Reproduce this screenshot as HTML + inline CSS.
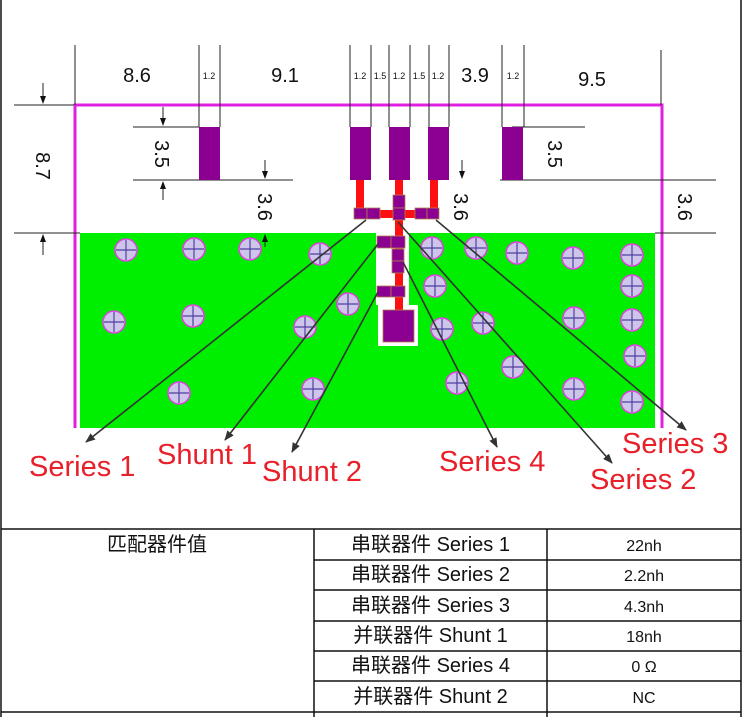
<!DOCTYPE html>
<html><head><meta charset="utf-8"><style>
html,body{margin:0;padding:0;background:#fff;}
body{width:744px;height:717px;position:relative;overflow:hidden;font-family:"Liberation Sans","Noto Sans CJK SC",sans-serif;}
svg{position:absolute;left:0;top:0;}
.t{position:absolute;font-size:20px;color:#111;text-align:center;line-height:24px;}
.v{font-size:16px;}
</style></head><body>
<svg width="744" height="717" viewBox="0 0 744 717">
<defs>
<marker id="ah" markerWidth="10" markerHeight="8" refX="9" refY="4" orient="auto" markerUnits="userSpaceOnUse"><path d="M0,0 L10,4 L0,8 z" fill="#333"/></marker>
<g id="via"><circle r="11" fill="#cdc6ea" stroke="#e040e0" stroke-width="1.5"/><path d="M-10,0 H10 M0,-10 V10" stroke="#5040a0" stroke-width="1.2"/></g>
</defs>
<rect x="80" y="233" width="575" height="195" fill="#00ee00"/>
<path d="M376,233 H409 V305 H418 V346 H378 V305 H376 Z" fill="#fff"/>
<path d="M75,428 V105 H662 V428" fill="none" stroke="#e020e0" stroke-width="3"/>
<g stroke="#222" stroke-width="1" fill="none">
<path d="M14,105 H74 M14,233 H80 M133,127 H199 M133,180 H293 M512,127 H585 M500,180 H716 M655,233 H716"/>
<path d="M75,45 V105 M199,45 V127 M220,45 V127 M350,45 V127 M371,45 V127 M389,45 V127 M410,45 V127 M429,45 V127 M449,45 V127 M502,45 V127 M524,45 V127 M661,50 V105"/>
<path d="M43,83 V100 M43,255 V238 M163,107 V122 M163,200 V185 M265,160 V175 M265,247 V238 M462,160 V175"/>
</g>
<g fill="#111">
<path d="M40,96 H46 L43,104 Z M40,242 H46 L43,234 Z M160,118 H166 L163,126 Z M160,189 H166 L163,181 Z M262,171 H268 L265,179 Z M262,242 H268 L265,234 Z M459,171 H465 L462,179 Z"/>
</g>
<g fill="#8b0090">
<rect x="199" y="127" width="21" height="53"/><rect x="350" y="127" width="21" height="53"/>
<rect x="389" y="127" width="21" height="53"/><rect x="428" y="127" width="21" height="53"/>
<rect x="502" y="127" width="21" height="53"/>
</g>
<g fill="#ff1010">
<rect x="356" y="180" width="8" height="32"/><rect x="395" y="180" width="8" height="140"/><rect x="430" y="180" width="8" height="32"/>
<rect x="360" y="210" width="78" height="8"/>
</g>
<g fill="#8b0090" stroke="#b08050" stroke-width="0.8">
<rect x="354" y="208" width="13" height="11"/><rect x="367" y="208" width="13" height="11"/>
<rect x="393" y="195" width="12" height="13"/><rect x="393" y="208" width="12" height="12"/>
<rect x="415" y="208" width="12" height="11"/><rect x="427" y="208" width="12" height="11"/>
<rect x="377" y="236" width="14" height="12"/><rect x="391" y="236" width="14" height="12"/>
<rect x="392" y="249" width="12" height="12"/><rect x="392" y="261" width="12" height="12"/>
<rect x="377" y="286" width="14" height="11"/><rect x="391" y="286" width="14" height="11"/>
<rect x="383" y="310" width="31" height="32"/>
</g>
<g>
<use href="#via" x="126" y="250"/><use href="#via" x="194" y="249"/><use href="#via" x="250" y="249"/><use href="#via" x="320" y="254"/>
<use href="#via" x="348" y="304"/><use href="#via" x="114" y="322"/><use href="#via" x="193" y="316"/><use href="#via" x="305" y="327"/>
<use href="#via" x="179" y="393"/><use href="#via" x="313" y="389"/>
<use href="#via" x="432" y="248"/><use href="#via" x="476" y="248"/><use href="#via" x="517" y="253"/><use href="#via" x="573" y="258"/><use href="#via" x="632" y="255"/>
<use href="#via" x="435" y="286"/><use href="#via" x="632" y="286"/><use href="#via" x="442" y="329"/><use href="#via" x="483" y="323"/>
<use href="#via" x="574" y="318"/><use href="#via" x="632" y="320"/><use href="#via" x="635" y="356"/><use href="#via" x="513" y="367"/>
<use href="#via" x="457" y="383"/><use href="#via" x="574" y="389"/><use href="#via" x="632" y="402"/>
</g>
<g stroke="#333" stroke-width="1.6" fill="none" marker-end="url(#ah)">
<path d="M366,220 L86,442"/><path d="M378,244 L225,440"/><path d="M378,292 L292,452"/>
<path d="M403,262 L497,447"/><path d="M398,222 L612,463"/><path d="M436,220 L686,430"/>
</g>
<g font-family="Liberation Sans, sans-serif" fill="#111">
<text x="137" y="82" font-size="20" text-anchor="middle">8.6</text>
<text x="285" y="82" font-size="20" text-anchor="middle">9.1</text>
<text x="475" y="82" font-size="20" text-anchor="middle">3.9</text>
<text x="592" y="86" font-size="20" text-anchor="middle">9.5</text>
<g font-size="9" text-anchor="middle">
<text x="209" y="79">1.2</text><text x="360" y="79">1.2</text><text x="380" y="79">1.5</text><text x="399" y="79">1.2</text><text x="419" y="79">1.5</text><text x="438" y="79">1.2</text><text x="513" y="79">1.2</text>
</g>
<g font-size="20" text-anchor="middle">
<text transform="translate(36,166) rotate(90)">8.7</text>
<text transform="translate(155,154) rotate(90)">3.5</text>
<text transform="translate(258,207) rotate(90)">3.6</text>
<text transform="translate(454,207) rotate(90)">3.6</text>
<text transform="translate(548,154) rotate(90)">3.5</text>
<text transform="translate(678,207) rotate(90)">3.6</text>
</g>
</g>
<g font-family="Liberation Sans, sans-serif" fill="#e8202a" font-size="29">
<text x="29" y="476">Series 1</text><text x="157" y="464">Shunt 1</text><text x="262" y="481">Shunt 2</text>
<text x="439" y="471">Series 4</text><text x="590" y="489">Series 2</text><text x="622" y="453">Series 3</text>
</g>
<g stroke="#111" stroke-width="1.5" fill="none">
<path d="M1,0 V717 M741,0 V717 M1,529 H741 M314,529 V717 M547,529 V717"/>
<path d="M314,560 H741 M314,590 H741 M314,621 H741 M314,651 H741 M314,681 H741 M1,712 H741"/>
</g>
</svg>
<div class="t" style="left:0;width:314px;top:533px;">匹配器件值</div>
<div class="t" style="left:314px;width:233px;top:533px;">串联器件 Series 1</div>
<div class="t" style="left:314px;width:233px;top:563px;">串联器件 Series 2</div>
<div class="t" style="left:314px;width:233px;top:594px;">串联器件 Series 3</div>
<div class="t" style="left:314px;width:233px;top:624px;">并联器件 Shunt 1</div>
<div class="t" style="left:314px;width:233px;top:654px;">串联器件 Series 4</div>
<div class="t" style="left:314px;width:233px;top:685px;">并联器件 Shunt 2</div>
<div class="t v" style="left:547px;width:194px;top:535px;">22nh</div>
<div class="t v" style="left:547px;width:194px;top:565px;">2.2nh</div>
<div class="t v" style="left:547px;width:194px;top:596px;">4.3nh</div>
<div class="t v" style="left:547px;width:194px;top:626px;">18nh</div>
<div class="t v" style="left:547px;width:194px;top:656px;">0 Ω</div>
<div class="t v" style="left:547px;width:194px;top:687px;">NC</div>
</body></html>
